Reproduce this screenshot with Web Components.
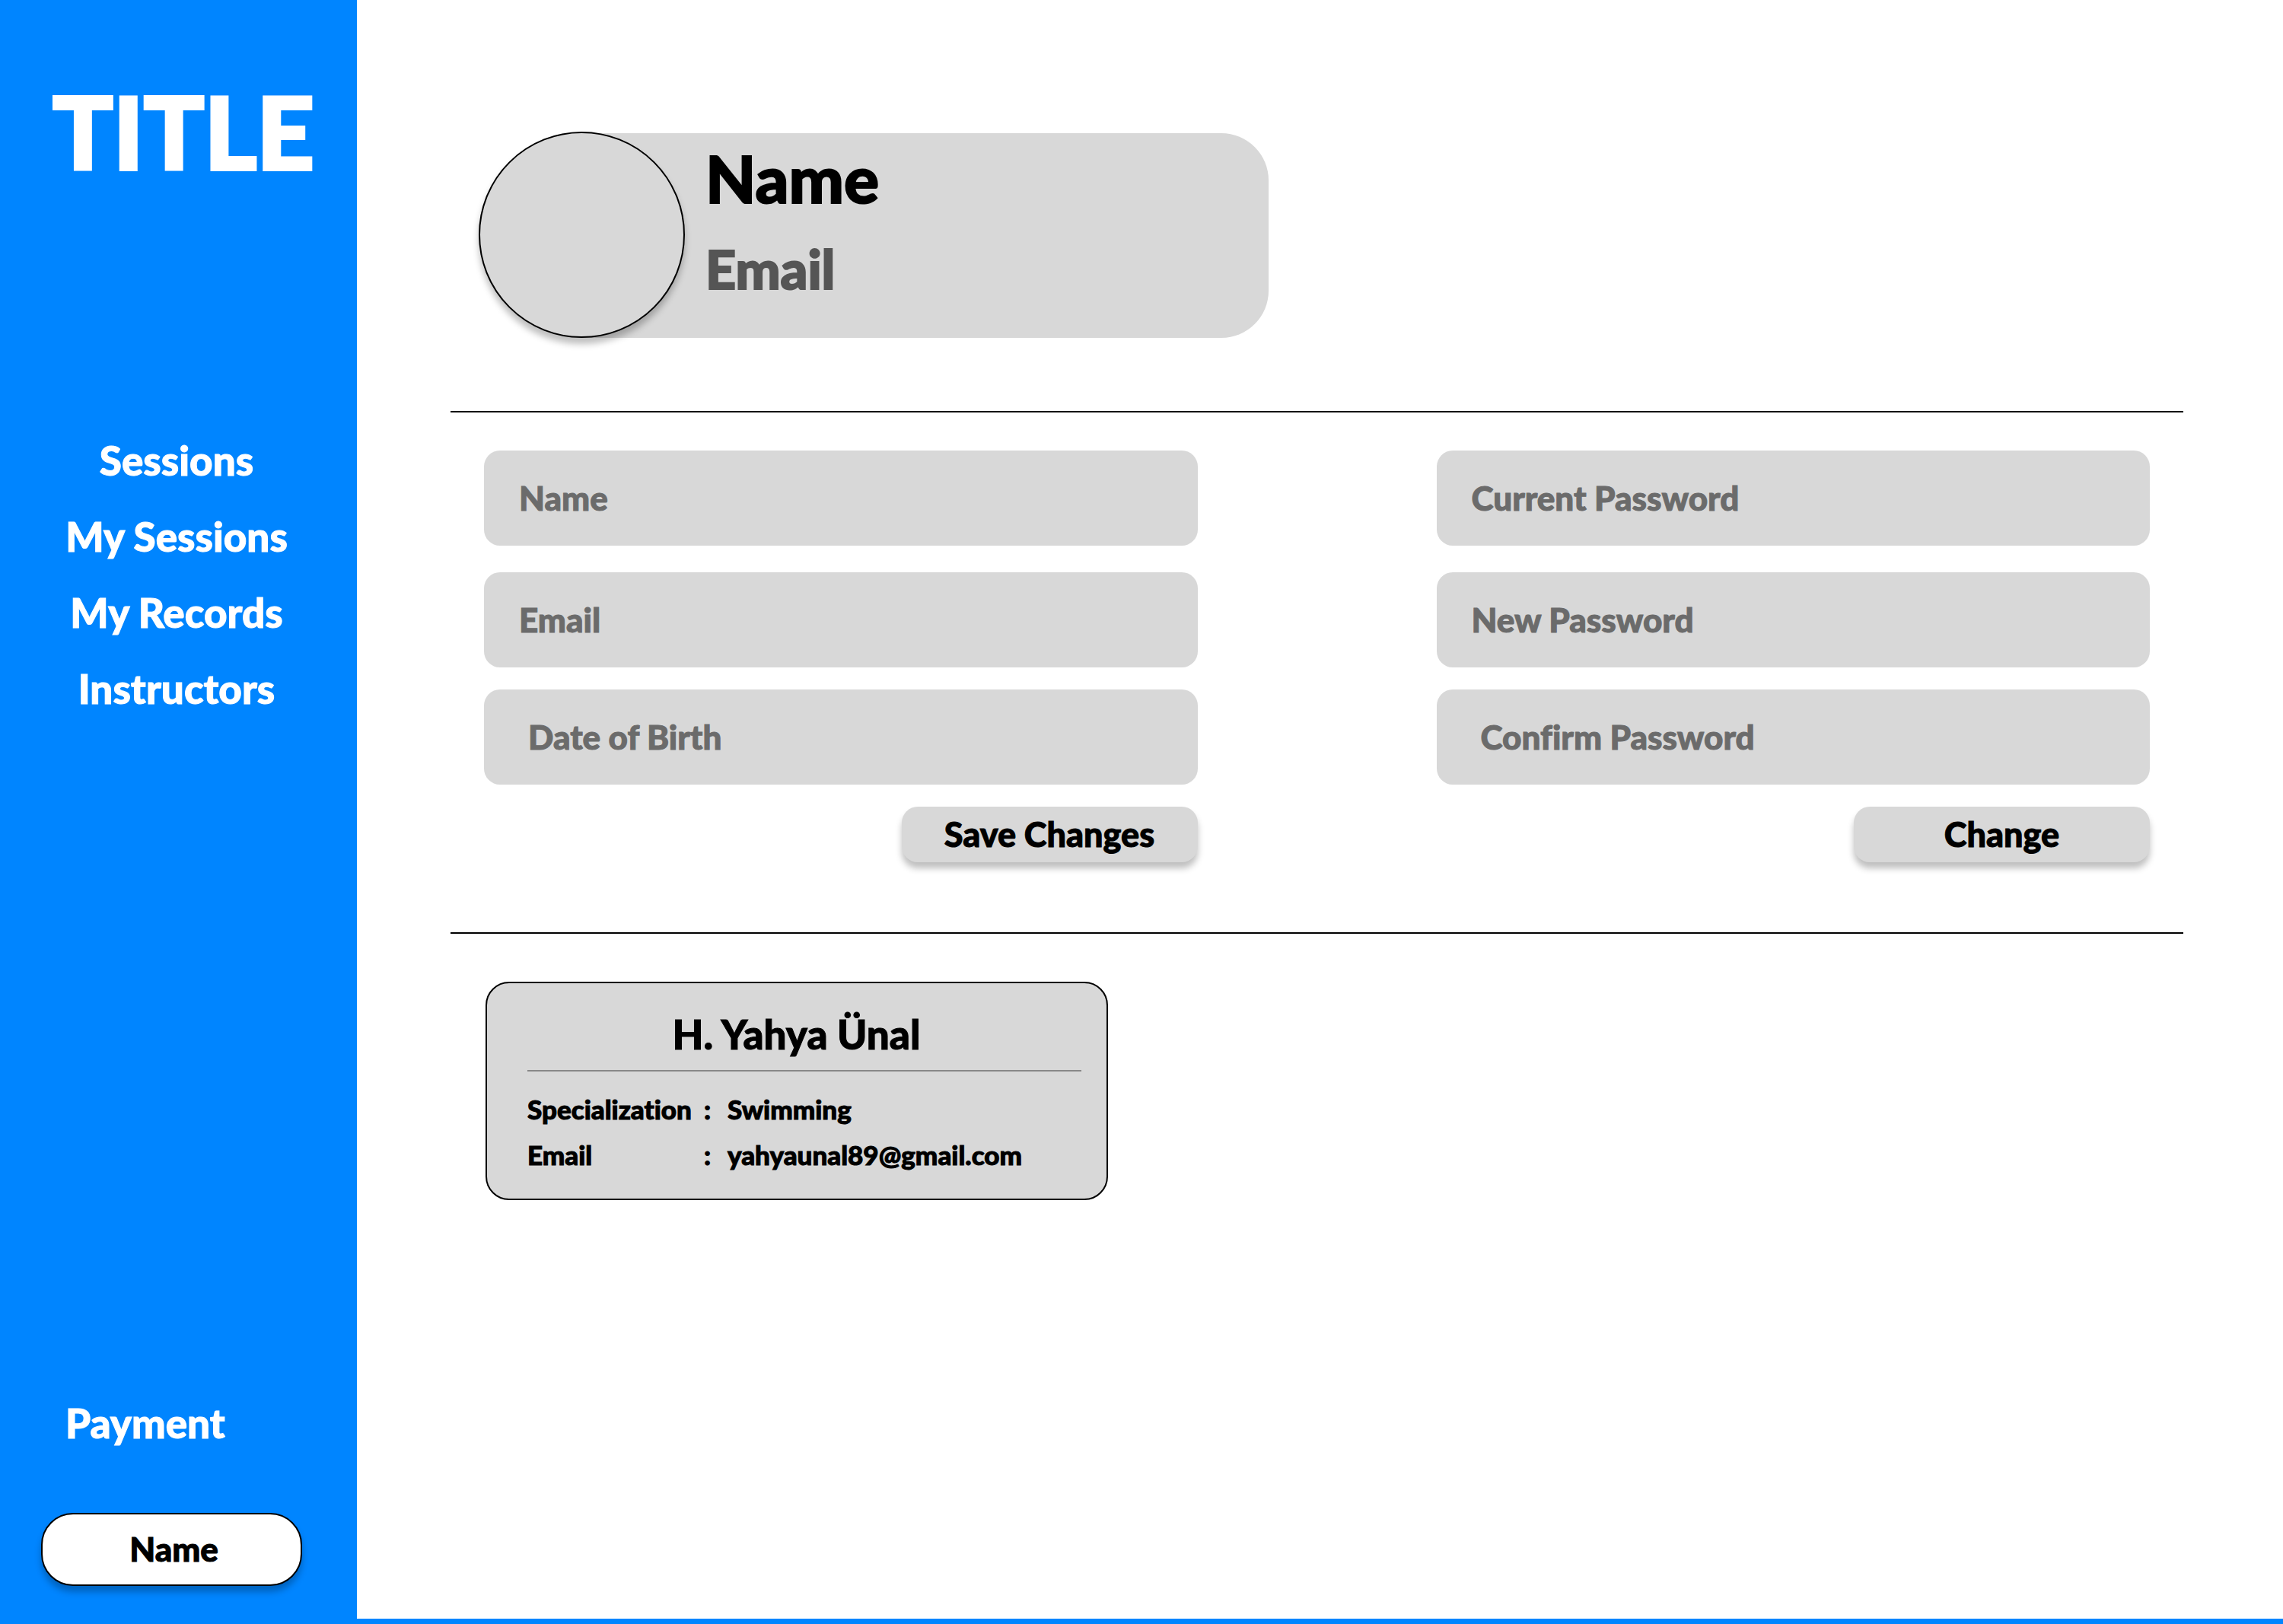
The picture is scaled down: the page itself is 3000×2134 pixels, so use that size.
<!DOCTYPE html>
<html lang="en">
<head>
<meta charset="utf-8">
<title>Profile</title>
<style>
  :root {
    --blue: #0085ff;
    --panel: #d8d8d8;
    --shadow: 0 8px 8px rgba(0, 0, 0, .25);
  }
  body {
    margin: 0;
    background: var(--blue);
    font-family: Lato, "Open Sans", sans-serif;
    font-weight: 900;
    font-variant-ligatures: none;
    -webkit-text-stroke-width: 1px;
    color: #000;
  }
</style>
</head>
<body>
<profile-page></profile-page>

<script>
const define = (name, html, setup) => {
  const template = document.createElement('template');
  template.innerHTML = html;
  customElements.define(name, class extends HTMLElement {
    constructor() {
      super();
      this.attachShadow({ mode: 'open' }).append(template.content.cloneNode(true));
    }
    connectedCallback() {
      if (setup) setup(this, this.shadowRoot);
    }
  });
};

define('nav-link', `
  <style>
    :host { display: block; }
    a { display: block; color: #fff; font-size: 53px; line-height: inherit; text-decoration: none; }
  </style>
  <a href="#"><slot></slot></a>`);

define('side-bar', `
  <style>
    :host {
      display: flex; flex-direction: column; box-sizing: border-box;
      flex: 0 0 469px; padding: 94px 0 50px; background: var(--blue);
    }
    h1 { margin: 0; padding-left: 69px; font: inherit; font-size: 132px; line-height: 156px; color: #fff; -webkit-text-stroke-width: 4px; }
    nav { display: flex; flex-direction: column; margin-top: 305px; padding-right: 5px; line-height: 100px; text-align: center; }
    .foot { display: flex; flex-direction: column; gap: 88px; margin-top: auto; line-height: 60px; }
    .foot nav-link { padding-left: 86px; }
    button {
      margin: 0 72px 0 54px; height: 96px; padding: 0 0 2px 6px;
      font: inherit; font-size: 44px; color: #000; background: #fff;
      border: 2px solid #000; border-radius: 42px; box-shadow: var(--shadow);
    }
  </style>
  <h1>TITLE</h1>
  <nav>
    <nav-link>Sessions</nav-link>
    <nav-link>My Sessions</nav-link>
    <nav-link>My Records</nav-link>
    <nav-link>Instructors</nav-link>
  </nav>
  <div class="foot">
    <nav-link>Payment</nav-link>
    <button type="button">Name</button>
  </div>`);

define('profile-header', `
  <style>
    :host { display: flex; align-items: flex-end; width: 1038px; -webkit-text-stroke-width: 2px; }
    .avatar {
      position: relative; flex: none; box-sizing: border-box; width: 271px; height: 271px;
      border: 2px solid #000; border-radius: 50%; background: var(--panel); box-shadow: var(--shadow);
    }
    .panel {
      flex: 1; box-sizing: border-box; height: 269px; margin-left: -136px; padding: 10px 0 0 163px;
      border-radius: 0 62px 62px 0; background: var(--panel);
    }
    h2, p { margin: 0; font: inherit; }
    h2 { font-size: 86px; line-height: 98px; }
    p { margin-top: 30px; font-size: 70px; line-height: 80px; color: #555; }
  </style>
  <div class="avatar"></div>
  <div class="panel">
    <h2><slot name="name"></slot></h2>
    <p><slot name="email"></slot></p>
  </div>`);

define('text-field', `
  <style>
    :host { display: block; }
    input {
      display: block; box-sizing: border-box; width: 100%; height: 125px; margin: 0;
      padding: 0 46px 2px; border: 0; border-radius: 21px; background: var(--panel);
      font: inherit; font-size: 44px; color: #000;
    }
    :host([indent]) input { padding-left: 58px; }
    input::placeholder { color: #6b6b6b; opacity: 1; }
  </style>
  <input>`, (host, root) => {
    const input = root.querySelector('input');
    input.type = host.getAttribute('type') || 'text';
    input.placeholder = host.getAttribute('label');
    input.setAttribute('aria-label', host.getAttribute('label'));
  });

define('action-button', `
  <style>
    :host { display: block; }
    button {
      display: block; width: 389px; height: 73px; padding: 0 0 2px; border: 0; border-radius: 21px;
      font: inherit; font-size: 45px; color: #000; background: var(--panel); box-shadow: var(--shadow);
    }
  </style>
  <button type="button"><slot></slot></button>`);

define('form-column', `
  <style>
    :host { display: flex; flex-direction: column; gap: 29px; }
    ::slotted(:first-child) { margin-bottom: 6px; }
    ::slotted(action-button) { align-self: flex-end; }
  </style>
  <slot></slot>`);

define('instructor-card', `
  <style>
    :host {
      display: block; box-sizing: border-box; width: 818px; height: 287px; padding: 37px 33px 0 53px;
      border: 2px solid #000; border-radius: 31px; background: var(--panel);
    }
    h3 { margin: 0; padding: 0 33px 17px 12px; border-bottom: 2px solid #888; font: inherit; font-size: 53px; line-height: 60px; text-align: center; }
    dl { display: grid; grid-template-columns: 232px 31px auto; margin: 19px 0 0; font-size: 35px; line-height: 60px; }
    dt, dd { margin: 0; }
  </style>
  <h3><slot name="name"></slot></h3>
  <dl>
    <dt>Specialization</dt><dd>:</dd><dd><slot name="specialization"></slot></dd>
    <dt>Email</dt><dd>:</dd><dd><slot name="email"></slot></dd>
  </dl>`);

define('profile-page', `
  <style>
    :host { display: flex; min-height: 100vh; }
    main { flex: 1; margin-bottom: 7px; padding: 173px 131px 0 123px; background: #fff; }
    profile-header { margin-left: 37px; }
    hr { height: 2px; margin: 0; border: 0; background: #000; }
    .first { margin-top: 96px; }
    .forms { display: grid; grid-template-columns: 1fr 1fr; gap: 314px; padding: 50px 44px 92px; }
    instructor-card { margin: 63px 0 0 46px; }
  </style>
  <side-bar></side-bar>
  <main>
    <profile-header>
      <span slot="name">Name</span>
      <span slot="email">Email</span>
    </profile-header>
    <hr class="first">
    <div class="forms">
      <form-column>
        <text-field label="Name"></text-field>
        <text-field label="Email" type="email"></text-field>
        <text-field label="Date of Birth" indent></text-field>
        <action-button>Save Changes</action-button>
      </form-column>
      <form-column>
        <text-field label="Current Password" type="password"></text-field>
        <text-field label="New Password" type="password"></text-field>
        <text-field label="Confirm Password" type="password" indent></text-field>
        <action-button>Change</action-button>
      </form-column>
    </div>
    <hr>
    <instructor-card>
      <span slot="name">H. Yahya Ünal</span>
      <span slot="specialization">Swimming</span>
      <span slot="email">yahyaunal89@gmail.com</span>
    </instructor-card>
  </main>`);
</script>
</body>
</html>
